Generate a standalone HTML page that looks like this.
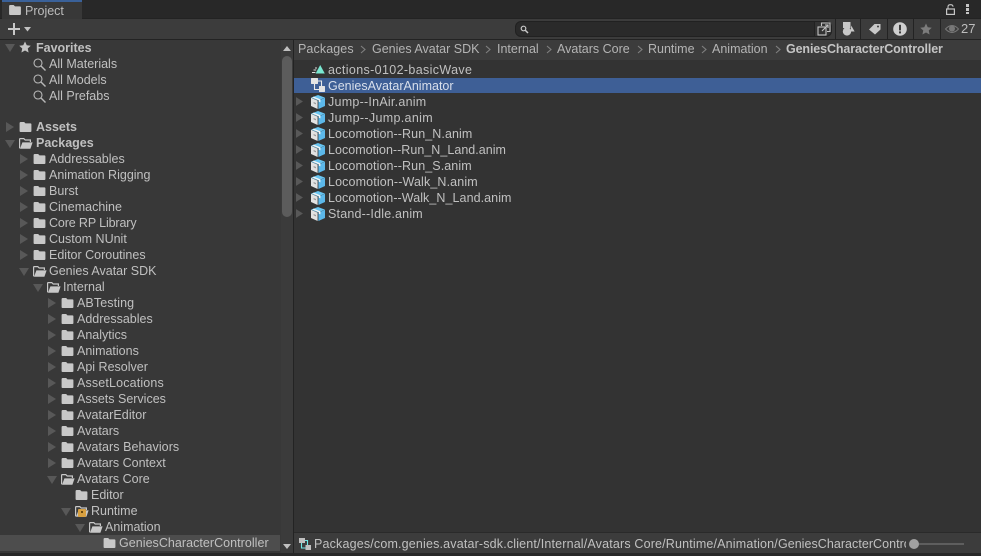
<!DOCTYPE html>
<html><head><meta charset="utf-8">
<style>
html,body{margin:0;padding:0;background:#282828}
#r{position:relative;width:981px;height:556px;overflow:hidden;background:#282828;font-family:"Liberation Sans",sans-serif;font-size:12.5px;color:#c0c0c0}
#r div{position:absolute}
.t{height:16px;line-height:16px;white-space:nowrap}
.b{font-weight:bold}
svg{position:absolute;overflow:visible}
</style></head><body>
<div id="r">
<svg width="0" height="0" style="position:absolute"><defs>
<symbol id="f" viewBox="0 0 13 11"><path d="M0 1.2Q0 0 1.2 0H5L6.5 1.5H12Q13 1.5 13 2.5V10Q13 11 12 11H1Q0 11 0 10Z" fill="#c8c8c8"/></symbol>
<symbol id="o" viewBox="0 0 14 11"><path d="M.6 10.4V1.2Q.6.6 1.2.6H4.8L6.2 2H11.4V4" fill="none" stroke="#c8c8c8" stroke-width="1.2"/><path d="M3.4 4.4H13.6L11.4 10.8H1Z" fill="#c8c8c8"/></symbol>
<symbol id="ar" viewBox="0 0 8 10"><path d="M0 0L8 5L0 10Z" fill="#585858"/></symbol>
<symbol id="ad" viewBox="0 0 10 8"><path d="M0 0H10L5 8Z" fill="#585858"/></symbol>
<symbol id="s" viewBox="0 0 13 13"><circle cx="5" cy="5" r="4" fill="none" stroke="#b8b8b8" stroke-width="1.1"/><path d="M8 8L12.5 12.5" stroke="#b8b8b8" stroke-width="1.4"/></symbol>
<symbol id="c" viewBox="0 0 14 14"><path d="M6.6 5.6L0 2.8V11L6.6 14Z" fill="#e2e2e2"/><path d="M7 0L14 2.6L7 5.4L0 2.6Z" fill="#68c4f0"/><path d="M7.4 5.6L14 2.8V11L7.4 14Z" fill="#5cb8ea"/><path d="M2.8 1.6L9.4 4.4V7.4L7.8 6.6V5.2L1.2 2.4Z" fill="#f4f4f4"/><path d="M2.6 7L5 8V9.4L2.6 8.4Z" fill="#9a9a9a"/></symbol>
</defs></svg>

<!-- title bar -->
<div style="left:2px;top:0;width:80px;height:19px;background:#383838"></div>
<div style="left:2px;top:0;width:80px;height:2px;background:#3a6199"></div>
<div style="left:0;top:18px;width:981px;height:1px;background:#232323"></div>
<div style="left:2px;top:18px;width:80px;height:1px;background:#383838"></div>
<svg style="left:9px;top:5px" width="12" height="10"><use href="#f" width="12" height="10"/></svg>
<div class="t" style="left:25px;top:3px;color:#bcbcbc">Project</div>
<svg style="left:946px;top:4px" width="9" height="11" viewBox="0 0 9 11"><path d="M2 4.6V2.8Q2 .7 4.5 .7T7 2.8" fill="none" stroke="#c4c4c4" stroke-width="1.1"/><rect x=".6" y="5" width="7.8" height="5.4" fill="none" stroke="#c4c4c4" stroke-width="1.2"/></svg>
<div style="left:966px;top:4px;width:3px;height:3px;background:#c4c4c4"></div>
<div style="left:966px;top:8px;width:3px;height:3px;background:#c4c4c4"></div>
<div style="left:966px;top:12px;width:3px;height:2px;background:#c4c4c4"></div>

<!-- toolbar -->
<div style="left:0;top:19px;width:981px;height:20px;background:#3c3c3c"></div>
<div style="left:0;top:39px;width:981px;height:1px;background:#232323"></div>
<div style="left:8px;top:28px;width:12px;height:2px;background:#c8c8c8"></div>
<div style="left:13px;top:23px;width:2px;height:12px;background:#c8c8c8"></div>
<svg style="left:24px;top:27px" width="8" height="5"><path d="M0 0H7L3.5 4.5Z" fill="#c2c2c2"/></svg>
<div style="left:515px;top:21px;width:300px;height:16px;background:#2a2a2a;border:1px solid #212121;border-radius:6px 0 0 6px;box-sizing:border-box"></div>
<svg style="left:520px;top:25px" width="9" height="9" viewBox="0 0 9 9"><circle cx="3.5" cy="3.5" r="2.3" fill="none" stroke="#c8c8c8" stroke-width="1.2"/><path d="M5 5L8 8" stroke="#c8c8c8" stroke-width="1.5"/></svg>
<div style="left:815px;top:21px;width:17px;height:16px;background:#333;border:1px solid #212121;border-left:0;border-radius:0 6px 6px 0;box-sizing:border-box"></div>
<svg style="left:817px;top:22px" width="15" height="14" viewBox="0 0 15 14"><path d="M4.5 4V1H13V9.5H10" fill="none" stroke="#c4c4c4" stroke-width="1.1"/><rect x="1" y="5" width="8" height="8" fill="none" stroke="#c4c4c4" stroke-width="1.1"/><path d="M5 9L11 3M8 3H11V6" fill="none" stroke="#c4c4c4" stroke-width="1.1"/></svg>
<div style="left:835px;top:19px;width:1px;height:20px;background:#232323"></div>
<div style="left:860px;top:19px;width:1px;height:20px;background:#232323"></div>
<div style="left:887px;top:19px;width:1px;height:20px;background:#232323"></div>
<div style="left:913px;top:19px;width:1px;height:20px;background:#232323"></div>
<div style="left:940px;top:19px;width:1px;height:20px;background:#232323"></div>
<svg style="left:842px;top:22px" width="13" height="14" viewBox="0 0 13 14"><rect x="1" y="0" width="7.5" height="6" fill="#c8c8c8"/><circle cx="5" cy="9.4" r="4.2" fill="#c8c8c8"/><path d="M9.2 3.5L12.6 9.5H8.6Z" fill="#c8c8c8"/></svg>
<svg style="left:868px;top:23px" width="13" height="12" viewBox="0 0 13 12"><path d="M6.5 1H12.5V6.5L7 11.5L1 6.5Z" fill="#c8c8c8"/><circle cx="10" cy="3.5" r="1" fill="#3c3c3c"/></svg>
<svg style="left:893px;top:22px" width="14" height="14" viewBox="0 0 14 14"><circle cx="7" cy="7" r="6.8" fill="#cfcfcf"/><rect x="6" y="2.8" width="2" height="5.6" fill="#3c3c3c"/><rect x="6" y="9.4" width="2" height="2" fill="#3c3c3c"/></svg>
<svg style="left:920px;top:23px" width="12" height="12" viewBox="0 0 24 24"><path d="M12 1L15.5 8.5L23.5 9.5L17.5 15L19.2 23L12 19L4.8 23L6.5 15L.5 9.5L8.5 8.5Z" fill="#7c7c7c"/></svg>
<svg style="left:945px;top:24px" width="14" height="10" viewBox="0 0 14 10"><path d="M.5 5Q7-2 13.5 5Q7 12 .5 5Z" fill="none" stroke="#787878" stroke-width="1"/><circle cx="7" cy="4.6" r="3" fill="#787878"/></svg>
<div class="t" style="left:961px;top:21px;color:#bdbdbd;font-size:13px">27</div>

<!-- left panel -->
<div style="left:0;top:40px;width:293px;height:513px;background:#383838"></div>
<div style="left:281px;top:40px;width:12px;height:513px;background:#3b3b3b"></div>
<div style="left:293px;top:40px;width:1px;height:513px;background:#232323"></div>
<div style="left:282px;top:56px;width:10px;height:161px;background:#5c5c5c;border-radius:5px"></div>
<svg style="left:283px;top:46px" width="9" height="6"><path d="M4 0L8 5H0Z" fill="#c0c0c0"/></svg>
<svg style="left:283px;top:544px" width="9" height="6"><path d="M0 0H8L4 5Z" fill="#c0c0c0"/></svg>
<div style="left:0;top:535px;width:280px;height:16px;background:#4d4d4d"></div>

<svg style="left:5px;top:44px" width="10" height="8"><use href="#ad" width="10" height="8"/></svg>
<svg style="left:19px;top:41px" width="12" height="12" viewBox="0 0 24 24"><path d="M12 1L15.5 8.5L23.5 9.5L17.5 15L19.2 23L12 19L4.8 23L6.5 15L.5 9.5L8.5 8.5Z" fill="#c4c4c4"/></svg>
<div class="t b" style="left:36px;top:40px">Favorites</div>
<svg style="left:33px;top:58px" width="13" height="13"><use href="#s" width="13" height="13"/></svg>
<div class="t" style="left:49px;top:56px">All Materials</div>
<svg style="left:33px;top:74px" width="13" height="13"><use href="#s" width="13" height="13"/></svg>
<div class="t" style="left:49px;top:72px">All Models</div>
<svg style="left:33px;top:90px" width="13" height="13"><use href="#s" width="13" height="13"/></svg>
<div class="t" style="left:49px;top:88px">All Prefabs</div>

<svg style="left:6px;top:122px" width="8" height="10"><use href="#ar" width="8" height="10"/></svg>
<svg style="left:19px;top:122px" width="13" height="10"><use href="#f" width="13" height="10"/></svg>
<div class="t b" style="left:36px;top:119px">Assets</div>
<svg style="left:5px;top:140px" width="10" height="8"><use href="#ad" width="10" height="8"/></svg>
<svg style="left:19px;top:138px" width="14" height="11"><use href="#o" width="14" height="11"/></svg>
<div class="t b" style="left:36px;top:135px">Packages</div>

<svg style="left:20px;top:154px" width="8" height="10"><use href="#ar" width="8" height="10"/></svg><svg style="left:33px;top:154px" width="13" height="10"><use href="#f" width="13" height="10"/></svg><div class="t" style="left:49px;top:151px">Addressables</div>
<svg style="left:20px;top:170px" width="8" height="10"><use href="#ar" width="8" height="10"/></svg><svg style="left:33px;top:170px" width="13" height="10"><use href="#f" width="13" height="10"/></svg><div class="t" style="left:49px;top:167px">Animation Rigging</div>
<svg style="left:20px;top:186px" width="8" height="10"><use href="#ar" width="8" height="10"/></svg><svg style="left:33px;top:186px" width="13" height="10"><use href="#f" width="13" height="10"/></svg><div class="t" style="left:49px;top:183px">Burst</div>
<svg style="left:20px;top:202px" width="8" height="10"><use href="#ar" width="8" height="10"/></svg><svg style="left:33px;top:202px" width="13" height="10"><use href="#f" width="13" height="10"/></svg><div class="t" style="left:49px;top:199px">Cinemachine</div>
<svg style="left:20px;top:218px" width="8" height="10"><use href="#ar" width="8" height="10"/></svg><svg style="left:33px;top:218px" width="13" height="10"><use href="#f" width="13" height="10"/></svg><div class="t" style="left:49px;top:215px;letter-spacing:-.13px">Core RP Library</div>
<svg style="left:20px;top:234px" width="8" height="10"><use href="#ar" width="8" height="10"/></svg><svg style="left:33px;top:234px" width="13" height="10"><use href="#f" width="13" height="10"/></svg><div class="t" style="left:49px;top:231px">Custom NUnit</div>
<svg style="left:20px;top:250px" width="8" height="10"><use href="#ar" width="8" height="10"/></svg><svg style="left:33px;top:250px" width="13" height="10"><use href="#f" width="13" height="10"/></svg><div class="t" style="left:49px;top:247px">Editor Coroutines</div>
<svg style="left:19px;top:268px" width="10" height="8"><use href="#ad" width="10" height="8"/></svg><svg style="left:33px;top:266px" width="14" height="11"><use href="#o" width="14" height="11"/></svg><div class="t" style="left:49px;top:263px">Genies Avatar SDK</div>
<svg style="left:33px;top:284px" width="10" height="8"><use href="#ad" width="10" height="8"/></svg><svg style="left:47px;top:282px" width="14" height="11"><use href="#o" width="14" height="11"/></svg><div class="t" style="left:63px;top:279px">Internal</div>

<svg style="left:48px;top:298px" width="8" height="10"><use href="#ar" width="8" height="10"/></svg><svg style="left:61px;top:298px" width="13" height="10"><use href="#f" width="13" height="10"/></svg><div class="t" style="left:77px;top:295px;letter-spacing:.1px">ABTesting</div>
<svg style="left:48px;top:314px" width="8" height="10"><use href="#ar" width="8" height="10"/></svg><svg style="left:61px;top:314px" width="13" height="10"><use href="#f" width="13" height="10"/></svg><div class="t" style="left:77px;top:311px">Addressables</div>
<svg style="left:48px;top:330px" width="8" height="10"><use href="#ar" width="8" height="10"/></svg><svg style="left:61px;top:330px" width="13" height="10"><use href="#f" width="13" height="10"/></svg><div class="t" style="left:77px;top:327px">Analytics</div>
<svg style="left:48px;top:346px" width="8" height="10"><use href="#ar" width="8" height="10"/></svg><svg style="left:61px;top:346px" width="13" height="10"><use href="#f" width="13" height="10"/></svg><div class="t" style="left:77px;top:343px">Animations</div>
<svg style="left:48px;top:362px" width="8" height="10"><use href="#ar" width="8" height="10"/></svg><svg style="left:61px;top:362px" width="13" height="10"><use href="#f" width="13" height="10"/></svg><div class="t" style="left:77px;top:359px">Api Resolver</div>
<svg style="left:48px;top:378px" width="8" height="10"><use href="#ar" width="8" height="10"/></svg><svg style="left:61px;top:378px" width="13" height="10"><use href="#f" width="13" height="10"/></svg><div class="t" style="left:77px;top:375px;letter-spacing:.15px">AssetLocations</div>
<svg style="left:48px;top:394px" width="8" height="10"><use href="#ar" width="8" height="10"/></svg><svg style="left:61px;top:394px" width="13" height="10"><use href="#f" width="13" height="10"/></svg><div class="t" style="left:77px;top:391px">Assets Services</div>
<svg style="left:48px;top:410px" width="8" height="10"><use href="#ar" width="8" height="10"/></svg><svg style="left:61px;top:410px" width="13" height="10"><use href="#f" width="13" height="10"/></svg><div class="t" style="left:77px;top:407px;letter-spacing:.08px">AvatarEditor</div>
<svg style="left:48px;top:426px" width="8" height="10"><use href="#ar" width="8" height="10"/></svg><svg style="left:61px;top:426px" width="13" height="10"><use href="#f" width="13" height="10"/></svg><div class="t" style="left:77px;top:423px">Avatars</div>
<svg style="left:48px;top:442px" width="8" height="10"><use href="#ar" width="8" height="10"/></svg><svg style="left:61px;top:442px" width="13" height="10"><use href="#f" width="13" height="10"/></svg><div class="t" style="left:77px;top:439px;letter-spacing:.06px">Avatars Behaviors</div>
<svg style="left:48px;top:458px" width="8" height="10"><use href="#ar" width="8" height="10"/></svg><svg style="left:61px;top:458px" width="13" height="10"><use href="#f" width="13" height="10"/></svg><div class="t" style="left:77px;top:455px">Avatars Context</div>
<svg style="left:47px;top:476px" width="10" height="8"><use href="#ad" width="10" height="8"/></svg><svg style="left:61px;top:474px" width="14" height="11"><use href="#o" width="14" height="11"/></svg><div class="t" style="left:77px;top:471px">Avatars Core</div>
<svg style="left:75px;top:490px" width="13" height="10"><use href="#f" width="13" height="10"/></svg><div class="t" style="left:91px;top:487px">Editor</div>
<svg style="left:61px;top:508px" width="10" height="8"><use href="#ad" width="10" height="8"/></svg><svg style="left:75px;top:506px" width="14" height="11"><use href="#o" width="14" height="11"/></svg>
<div style="left:78px;top:509px;width:8px;height:8px;background:#d8a040;border-radius:1px"></div>
<div style="left:81px;top:511px;width:2px;height:2px;background:#6b4a10"></div>
<div class="t" style="left:91px;top:503px">Runtime</div>
<svg style="left:75px;top:524px" width="10" height="8"><use href="#ad" width="10" height="8"/></svg><svg style="left:89px;top:522px" width="14" height="11"><use href="#o" width="14" height="11"/></svg><div class="t" style="left:105px;top:519px">Animation</div>
<svg style="left:103px;top:538px" width="13" height="10"><use href="#f" width="13" height="10"/></svg><div class="t" style="left:119px;top:535px;letter-spacing:.04px">GeniesCharacterController</div>

<!-- right panel -->
<div style="left:294px;top:40px;width:687px;height:20px;background:#3c3c3c"></div>
<div style="left:294px;top:60px;width:687px;height:473px;background:#333333"></div>
<div style="left:294px;top:533px;width:687px;height:20px;background:#3c3c3c"></div>
<div style="left:294px;top:532px;width:687px;height:1px;background:#2a2a2a"></div>

<div class="t" style="left:298px;top:41px;color:#b4b4b4;letter-spacing:.1px">Packages</div>
<div class="t" style="left:372px;top:41px;color:#b4b4b4">Genies Avatar SDK</div>
<div class="t" style="left:497px;top:41px;color:#b4b4b4">Internal</div>
<div class="t" style="left:557px;top:41px;color:#b4b4b4">Avatars Core</div>
<div class="t" style="left:648px;top:41px;color:#b4b4b4">Runtime</div>
<div class="t" style="left:712px;top:41px;color:#b4b4b4">Animation</div>
<div class="t b" style="left:786px;top:41px;color:#c4c4c4;letter-spacing:-.12px">GeniesCharacterController</div>
<svg style="left:360px;top:45px" width="6" height="9"><path d="M1 1L5 4.5L1 8" fill="none" stroke="#808080" stroke-width="1.1"/></svg>
<svg style="left:485px;top:45px" width="6" height="9"><path d="M1 1L5 4.5L1 8" fill="none" stroke="#808080" stroke-width="1.1"/></svg>
<svg style="left:546px;top:45px" width="6" height="9"><path d="M1 1L5 4.5L1 8" fill="none" stroke="#808080" stroke-width="1.1"/></svg>
<svg style="left:637px;top:45px" width="6" height="9"><path d="M1 1L5 4.5L1 8" fill="none" stroke="#808080" stroke-width="1.1"/></svg>
<svg style="left:701px;top:45px" width="6" height="9"><path d="M1 1L5 4.5L1 8" fill="none" stroke="#808080" stroke-width="1.1"/></svg>
<svg style="left:775px;top:45px" width="6" height="9"><path d="M1 1L5 4.5L1 8" fill="none" stroke="#808080" stroke-width="1.1"/></svg>

<div style="left:294px;top:78px;width:687px;height:15px;background:#3e5f96"></div>

<svg style="left:312px;top:65px" width="13" height="9" viewBox="0 0 13 9"><path d="M8.2 0L12.8 8.5H3.6Z" fill="#7ae8d2"/><path d="M3 3H5M1.5 5H4.2M0 7.5H3.4" stroke="#dcdcdc" stroke-width="1"/></svg>
<div class="t" style="left:328px;top:62px;letter-spacing:.36px">actions-0102-basicWave</div>

<svg style="left:311px;top:78px" width="14" height="15" viewBox="0 0 14 15"><path d="M6 3H10.5V8M8 11.5H3.5V6" fill="none" stroke="#e8e8e8" stroke-width="1.1"/><rect x="0" y="0" width="7" height="6" rx=".6" fill="#e4e4e4"/><rect x="8" y="8" width="6" height="6" rx=".6" fill="#e4e4e4"/></svg>
<div class="t" style="left:328px;top:78px;color:#d8dfeb">GeniesAvatarAnimator</div>

<svg style="left:296px;top:97px" width="7" height="9"><use href="#ar" width="7" height="9"/></svg><svg style="left:311px;top:95px" width="14" height="14"><use href="#c" width="14" height="14"/></svg><div class="t" style="left:328px;top:94px;letter-spacing:.25px">Jump--InAir.anim</div>
<svg style="left:296px;top:113px" width="7" height="9"><use href="#ar" width="7" height="9"/></svg><svg style="left:311px;top:111px" width="14" height="14"><use href="#c" width="14" height="14"/></svg><div class="t" style="left:328px;top:110px;letter-spacing:.33px">Jump--Jump.anim</div>
<svg style="left:296px;top:129px" width="7" height="9"><use href="#ar" width="7" height="9"/></svg><svg style="left:311px;top:127px" width="14" height="14"><use href="#c" width="14" height="14"/></svg><div class="t" style="left:328px;top:126px;letter-spacing:.09px">Locomotion--Run_N.anim</div>
<svg style="left:296px;top:145px" width="7" height="9"><use href="#ar" width="7" height="9"/></svg><svg style="left:311px;top:143px" width="14" height="14"><use href="#c" width="14" height="14"/></svg><div class="t" style="left:328px;top:142px;letter-spacing:.03px">Locomotion--Run_N_Land.anim</div>
<svg style="left:296px;top:161px" width="7" height="9"><use href="#ar" width="7" height="9"/></svg><svg style="left:311px;top:159px" width="14" height="14"><use href="#c" width="14" height="14"/></svg><div class="t" style="left:328px;top:158px;letter-spacing:.09px">Locomotion--Run_S.anim</div>
<svg style="left:296px;top:177px" width="7" height="9"><use href="#ar" width="7" height="9"/></svg><svg style="left:311px;top:175px" width="14" height="14"><use href="#c" width="14" height="14"/></svg><div class="t" style="left:328px;top:174px;letter-spacing:.13px">Locomotion--Walk_N.anim</div>
<svg style="left:296px;top:193px" width="7" height="9"><use href="#ar" width="7" height="9"/></svg><svg style="left:311px;top:191px" width="14" height="14"><use href="#c" width="14" height="14"/></svg><div class="t" style="left:328px;top:190px;letter-spacing:.07px">Locomotion--Walk_N_Land.anim</div>
<svg style="left:296px;top:209px" width="7" height="9"><use href="#ar" width="7" height="9"/></svg><svg style="left:311px;top:207px" width="14" height="14"><use href="#c" width="14" height="14"/></svg><div class="t" style="left:328px;top:206px;letter-spacing:.2px">Stand--Idle.anim</div>

<!-- status bar -->
<svg style="left:299px;top:538px" width="12" height="12" viewBox="0 0 12 12"><path d="M4 2.5H8.5V8M7 10H2.5V5" fill="none" stroke="#6fe8e8" stroke-width="1.1"/><rect x="0" y="0" width="6" height="5" fill="#c0c0c0"/><rect x="6.5" y="7" width="5.5" height="5" fill="#c0c0c0"/></svg>
<div style="left:314px;top:536px;width:592px;height:16px;overflow:hidden"><div class="t" style="left:0;top:0;letter-spacing:.17px">Packages/com.genies.avatar-sdk.client/Internal/Avatars Core/Runtime/Animation/<span style="letter-spacing:.04px">GeniesCharacterController</span></div></div>
<div style="left:914px;top:543px;width:50px;height:2px;background:#5e5e5e"></div>
<div style="left:909px;top:539px;width:10px;height:10px;border-radius:50%;background:#a0a0a0"></div>
</div>
</body></html>
